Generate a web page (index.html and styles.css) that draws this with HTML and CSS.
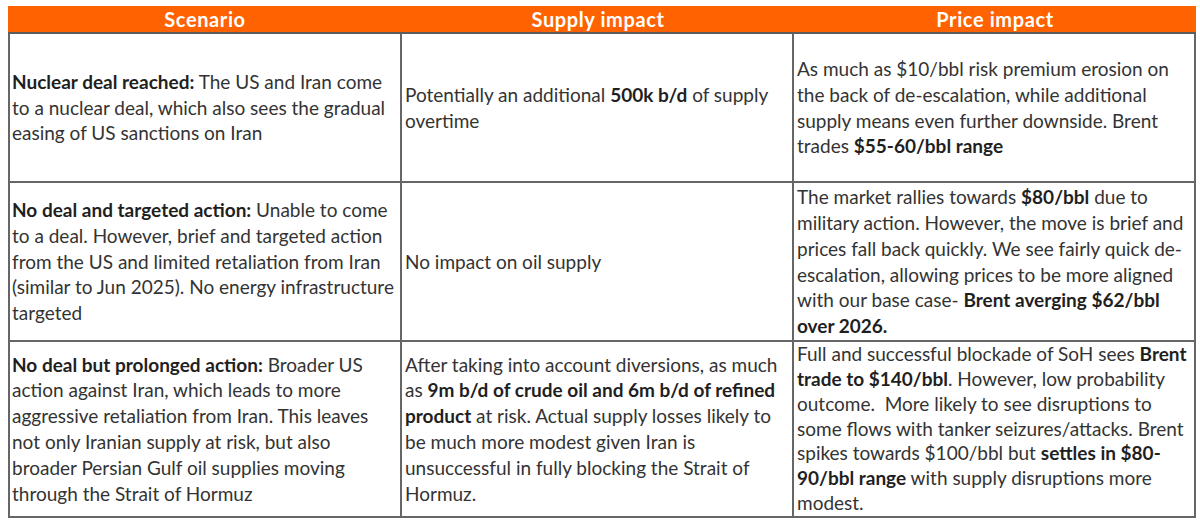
FILE: index.html
```html
<!DOCTYPE html>
<html lang="en">
<head>
<meta charset="utf-8">
<title>Iran scenarios</title>
<link rel="stylesheet" href="styles.css">
</head>
<body>
<div class="table">
  <div class="th">Scenario</div>
  <div class="th">Supply impact</div>
  <div class="th">Price impact</div>

  <div class="td first r1"><p><b>Nuclear deal reached:</b> The US and Iran come<br>to a nuclear deal, which also sees the gradual<br>easing of US sanctions on Iran</p></div>
  <div class="td r1"><p>Potentially an additional <b>500k b/d</b> of supply<br>overtime</p></div>
  <div class="td r1"><p>As much as $10/bbl risk premium erosion on<br>the back of de-escalation, while additional<br>supply means even further downside. Brent<br>trades <b>$55-60/bbl range</b></p></div>

  <div class="td first r2"><p><b>No deal and targeted action:</b> Unable to come<br>to a deal. However, brief and targeted action<br>from the US and limited retaliation from Iran<br>(similar to Jun 2025). No energy infrastructure<br>targeted</p></div>
  <div class="td r2"><p>No impact on oil supply</p></div>
  <div class="td r2"><p>The market rallies towards <b>$80/bbl</b> due to<br>military action. However, the move is brief and<br>prices fall back quickly. We see fairly quick de-<br>escalation, allowing prices to be more aligned<br>with our base case- <b>Brent averging $62/bbl<br>over 2026.</b></p></div>

  <div class="td first r3"><p><b>No deal but prolonged action:</b> Broader US<br>action against Iran, which leads to more<br>aggressive retaliation from Iran. This leaves<br>not only Iranian supply at risk, but also<br>broader Persian Gulf oil supplies moving<br>through the Strait of Hormuz</p></div>
  <div class="td r3"><p>After taking into account diversions, as much<br>as <b>9m b/d of crude oil and 6m b/d of refined<br>product</b> at risk. Actual supply losses likely to<br>be much more modest given Iran is<br>unsuccessful in fully blocking the Strait of<br>Hormuz.</p></div>
  <div class="td r3 tight"><p>Full and successful blockade of SoH sees <b>Brent<br>trade to $140/bbl</b>. However, low probability<br>outcome.&nbsp; More likely to see disruptions to<br>some flows with tanker seizures/attacks. Brent<br>spikes towards $100/bbl but <b>settles in $80-<br>90/bbl range</b> with supply disruptions more<br>modest.</p></div>
</div>
</body>
</html>
```

FILE: styles.css
```css
html, body {
  margin: 0;
  padding: 0;
  background: #ffffff;
}

body {
  font-family: "Lato", "Liberation Sans", sans-serif;
  color: #333333;
}

.table {
  margin: 6px 0 0 8px;
  width: 1188px;
  display: grid;
  grid-template-columns: 394px 392px 402px;
  grid-template-rows: 28px 149px 159px 176px;
}

.th {
  background: #ff6200;
  color: #ffffff;
  font-weight: 700;
  font-size: 20px;
  letter-spacing: 0.6px;
  line-height: 26px;
  text-align: center;
  border-bottom: 2px solid #5c5c5c;
  box-sizing: border-box;
}

.td {
  box-sizing: border-box;
  border-right: 2px solid #666666;
  border-bottom: 2px solid #666666;
  display: flex;
  align-items: center;
  padding: 0 3px;
  font-size: 19px;
  line-height: 25.8px;
  white-space: nowrap;
}

.td.first {
  border-left: 2px solid #666666;
  padding-left: 2px;
}

.td.tight {
  line-height: 24.8px;
}

.td p {
  margin: 0;
}

.td b {
  color: #1f1f1f;
  font-weight: 700;
}
```
